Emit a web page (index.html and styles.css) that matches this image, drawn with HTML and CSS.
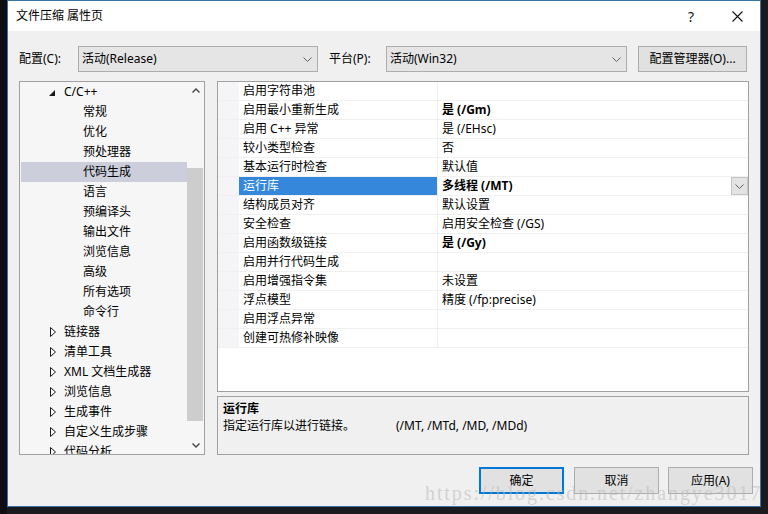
FILE: index.html
```html
<!DOCTYPE html>
<html lang="zh-CN">
<head>
<meta charset="utf-8">
<title>文件压缩 属性页</title>
<link rel="stylesheet" href="styles.css">
</head>
<body>
<div class="desk">
  <div class="strip-left"></div>
  <div class="dialog">
    <div class="titlebar">
      <div class="title">文件压缩 属性页</div>
      <div class="tb-btn help">?</div>
      <div class="tb-btn close">
        <svg width="11" height="11" viewBox="0 0 11 11"><path d="M0.5 0.5 L10.5 10.5 M10.5 0.5 L0.5 10.5" stroke="#111" stroke-width="1.1" fill="none"/></svg>
      </div>
    </div>
    <div class="content">
      <div class="config-row">
        <div class="lbl lbl1">配置(C):</div>
        <div class="combo combo1"><span>活动(Release)</span>
          <svg class="chev" width="9" height="5" viewBox="0 0 9 5"><path d="M0.5 0.5 L4.5 4.5 L8.5 0.5" stroke="#606060" fill="none"/></svg>
        </div>
        <div class="lbl lbl2">平台(P):</div>
        <div class="combo combo2"><span>活动(Win32)</span>
          <svg class="chev" width="9" height="5" viewBox="0 0 9 5"><path d="M0.5 0.5 L4.5 4.5 L8.5 0.5" stroke="#606060" fill="none"/></svg>
        </div>
        <div class="btn cfg-btn">配置管理器(O)...</div>
      </div>
      <div class="main">
        <div class="tree">
          <div class="tree-list">
            <div class="ti lvl1"><svg class="exp" width="10" height="10" viewBox="0 0 10 10"><path d="M7 3 L7 9 L1 9 Z" fill="#1a1a1a"/></svg><span>C/C++</span></div>
            <div class="ti lvl2">常规</div>
            <div class="ti lvl2">优化</div>
            <div class="ti lvl2">预处理器</div>
            <div class="ti lvl2 sel">代码生成</div>
            <div class="ti lvl2">语言</div>
            <div class="ti lvl2">预编译头</div>
            <div class="ti lvl2">输出文件</div>
            <div class="ti lvl2">浏览信息</div>
            <div class="ti lvl2">高级</div>
            <div class="ti lvl2">所有选项</div>
            <div class="ti lvl2">命令行</div>
            <div class="ti lvl1"><svg class="exp" width="10" height="10" viewBox="0 0 10 10"><path d="M2.5 0.5 L7.5 5 L2.5 9.5 Z" stroke="#1a1a1a" fill="none"/></svg><span>链接器</span></div>
            <div class="ti lvl1"><svg class="exp" width="10" height="10" viewBox="0 0 10 10"><path d="M2.5 0.5 L7.5 5 L2.5 9.5 Z" stroke="#1a1a1a" fill="none"/></svg><span>清单工具</span></div>
            <div class="ti lvl1"><svg class="exp" width="10" height="10" viewBox="0 0 10 10"><path d="M2.5 0.5 L7.5 5 L2.5 9.5 Z" stroke="#1a1a1a" fill="none"/></svg><span>XML 文档生成器</span></div>
            <div class="ti lvl1"><svg class="exp" width="10" height="10" viewBox="0 0 10 10"><path d="M2.5 0.5 L7.5 5 L2.5 9.5 Z" stroke="#1a1a1a" fill="none"/></svg><span>浏览信息</span></div>
            <div class="ti lvl1"><svg class="exp" width="10" height="10" viewBox="0 0 10 10"><path d="M2.5 0.5 L7.5 5 L2.5 9.5 Z" stroke="#1a1a1a" fill="none"/></svg><span>生成事件</span></div>
            <div class="ti lvl1"><svg class="exp" width="10" height="10" viewBox="0 0 10 10"><path d="M2.5 0.5 L7.5 5 L2.5 9.5 Z" stroke="#1a1a1a" fill="none"/></svg><span>自定义生成步骤</span></div>
            <div class="ti lvl1"><svg class="exp" width="10" height="10" viewBox="0 0 10 10"><path d="M2.5 0.5 L7.5 5 L2.5 9.5 Z" stroke="#1a1a1a" fill="none"/></svg><span>代码分析</span></div>
          </div>
          <div class="vscroll">
            <div class="sb-arrow"><svg width="8" height="5" viewBox="0 0 8 5"><path d="M0.5 4.5 L4 1 L7.5 4.5" stroke="#444" stroke-width="1.4" fill="none"/></svg></div>
            <div class="sb-track"><div class="sb-thumb"></div></div>
            <div class="sb-arrow"><svg width="8" height="5" viewBox="0 0 8 5"><path d="M0.5 0.5 L4 4 L7.5 0.5" stroke="#444" stroke-width="1.4" fill="none"/></svg></div>
          </div>
        </div>
        <div class="right-col">
          <div class="grid">
            <div class="row"><div class="mg"></div><div class="name">启用字符串池</div><div class="value"></div></div>
            <div class="row"><div class="mg"></div><div class="name">启用最小重新生成</div><div class="value bold">是 (/Gm)</div></div>
            <div class="row"><div class="mg"></div><div class="name">启用 C++ 异常</div><div class="value">是 (/EHsc)</div></div>
            <div class="row"><div class="mg"></div><div class="name">较小类型检查</div><div class="value">否</div></div>
            <div class="row"><div class="mg"></div><div class="name">基本运行时检查</div><div class="value">默认值</div></div>
            <div class="row selrow"><div class="mg"></div><div class="name">运行库</div><div class="value bold"><span class="vtext">多线程 (/MT)</span>
              <div class="drop"><svg width="9" height="5" viewBox="0 0 9 5"><path d="M0.5 0.5 L4.5 4.5 L8.5 0.5" stroke="#606060" fill="none"/></svg></div></div></div>
            <div class="row"><div class="mg"></div><div class="name">结构成员对齐</div><div class="value">默认设置</div></div>
            <div class="row"><div class="mg"></div><div class="name">安全检查</div><div class="value">启用安全检查 (/GS)</div></div>
            <div class="row"><div class="mg"></div><div class="name">启用函数级链接</div><div class="value bold">是 (/Gy)</div></div>
            <div class="row"><div class="mg"></div><div class="name">启用并行代码生成</div><div class="value"></div></div>
            <div class="row"><div class="mg"></div><div class="name">启用增强指令集</div><div class="value">未设置</div></div>
            <div class="row"><div class="mg"></div><div class="name">浮点模型</div><div class="value">精度 (/fp:precise)</div></div>
            <div class="row"><div class="mg"></div><div class="name">启用浮点异常</div><div class="value"></div></div>
            <div class="row"><div class="mg"></div><div class="name">创建可热修补映像</div><div class="value"></div></div>
          </div>
          <div class="desc">
            <div class="desc-title">运行库</div>
            <div class="desc-text"><span class="desc-main">指定运行库以进行链接。</span><span>(/MT, /MTd, /MD, /MDd)</span></div>
          </div>
        </div>
      </div>
    </div>
    <div class="buttons">
      <div class="btn dlg-btn default">确定</div>
      <div class="btn dlg-btn b2">取消</div>
      <div class="btn dlg-btn b3">应用(A)</div>
    </div>
  </div>
</div>
<div class="watermark">https://blog.csdn.net/zhangye3017</div>
</body>
</html>
```

FILE: styles.css
```css
* { box-sizing: border-box; }
html, body { margin: 0; padding: 0; }
body {
  width: 768px;
  height: 514px;
  overflow: hidden;
  position: relative;
  background: #1b1b1f;
  font-family: "Noto Sans", "Noto Sans CJK SC", sans-serif;
  font-size: 12px;
  color: #000;
}
.desk { display: flex; height: 514px; }
.strip-left { width: 7px; background: #0d0d12; }
.dialog {
  width: 754px;
  height: 507px;
  border: 1px solid #3b72aa;
  background: #f0f0f0;
  display: flex;
  flex-direction: column;
}
.titlebar {
  height: 30px;
  background: #fff;
  display: flex;
  align-items: center;
  padding-left: 8px;
}
.title { flex: 1; line-height: 16px; margin-top: -1px; }
.tb-btn {
  width: 46px;
  height: 30px;
  display: flex;
  align-items: center;
  justify-content: center;
}
.help { font-size: 14px; color: #111; }
.content { padding: 0 11px; }
.config-row {
  margin-top: 15px;
  height: 26px;
  display: flex;
  align-items: center;
}
.lbl { line-height: 16px; }
.lbl1 { width: 59px; }
.lbl2 { width: 57px; margin-left: 11px; }
.combo {
  height: 26px;
  border: 1px solid #adadad;
  background: #e5e5e5;
  display: flex;
  align-items: center;
  padding-left: 3px;
  padding-right: 5px;
}
.combo span { flex: 1; line-height: 16px; }
.combo1 { width: 240px; }
.combo2 { width: 241px; }
.btn {
  border: 1px solid #adadad;
  background: #e1e1e1;
  display: flex;
  align-items: center;
  justify-content: center;
  line-height: 16px;
}
.cfg-btn { width: 109px; height: 26px; margin-left: 11px; }
.main {
  margin-top: 9px;
  height: 374px;
  display: flex;
  gap: 12px;
}
.tree {
  width: 186px;
  height: 374px;
  border: 1px solid #a0a0a0;
  background: #f6f6f6;
  display: flex;
}
.tree-list { flex: 1; overflow: hidden; padding-top: 0; }
.ti {
  height: 20px;
  display: flex;
  align-items: center;
  line-height: 16px;
  white-space: nowrap;
  margin-left: 1px;
}
.ti.lvl1 { padding-left: 27px; }
.ti.lvl1 .exp { margin-right: 6px; }
.ti.lvl2 { padding-left: 62px; }
.ti.sel { background: #cccedb; }
.vscroll {
  width: 17px;
  display: flex;
  flex-direction: column;
}
.sb-arrow {
  height: 17px;
  display: flex;
  align-items: center;
  justify-content: center;
}
.sb-track { flex: 1; padding: 69px 1px 0 0; }
.sb-thumb { height: 253px; background: #cdcdcd; }
.right-col {
  width: 532px;
  display: flex;
  flex-direction: column;
  gap: 4px;
}
.grid {
  height: 311px;
  border: 1px solid #a0a0a0;
  background: #fff;
}
.row {
  height: 19px;
  display: flex;
  border-bottom: 1px solid #f0f0f0;
  line-height: 16px;
}
.mg { width: 21px; background: #f5f5f7; }
.name {
  width: 198px;
  padding-left: 4px;
  display: flex;
  align-items: center;
  white-space: nowrap;
}
.value {
  flex: 1;
  border-left: 1px solid #f0f0f0;
  padding-left: 4px;
  display: flex;
  align-items: center;
  white-space: nowrap;
}
.bold { font-weight: bold; }
.selrow .name { background: #3487db; color: #fff; }
.vtext { flex: 1; }
.drop {
  width: 17px;
  height: 18px;
  background: #e3e3e3;
  border: 1px solid #c4c4c4;
  display: flex;
  align-items: center;
  justify-content: center;
  align-self: flex-start;
}
.desc {
  height: 59px;
  border: 1px solid #a0a0a0;
  background: #f0f0f0;
  padding: 3px 5px 0;
  line-height: 17px;
}
.desc-title { font-weight: bold; }
.desc-main { display: inline-block; width: 173px; }
.buttons {
  margin-top: 12px;
  height: 27px;
  display: flex;
  justify-content: flex-end;
  padding-right: 7px;
}
.dlg-btn { width: 85px; height: 27px; }
.dlg-btn.default { border: 2px solid #0078d7; }
.b2 { margin-left: 10px; }
.b3 { margin-left: 9px; }
.watermark {
  position: absolute;
  left: 425px;
  top: 482px;
  font-family: "Liberation Serif", serif;
  font-size: 20px;
  letter-spacing: 1.9px;
  color: rgba(185, 185, 185, 0.55);
  white-space: nowrap;
}
```
